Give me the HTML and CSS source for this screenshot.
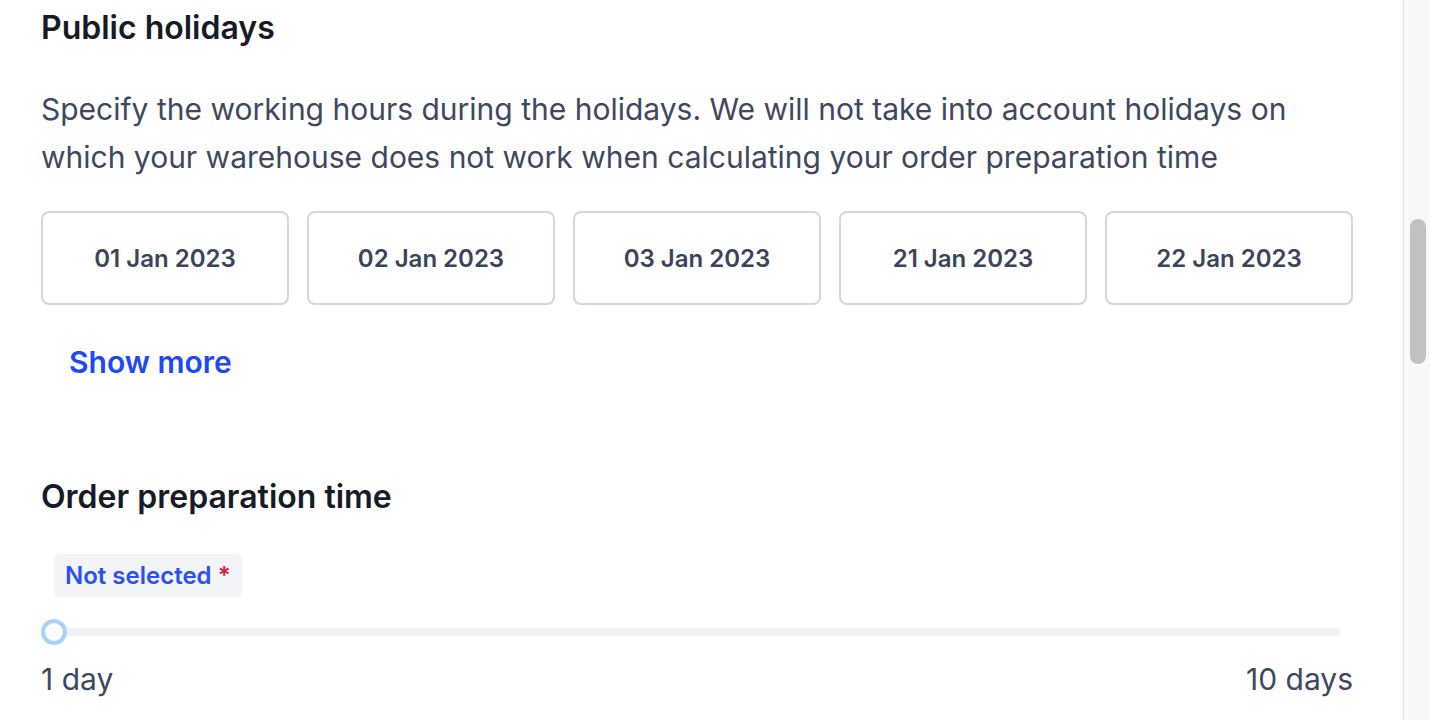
FILE: index.html
```
<!DOCTYPE html>
<html>
<head>
<meta charset="utf-8">
<link rel="stylesheet" href="styles.css">
</head>
<body>
<div class="page">
  <main class="content">
    <h2 class="title">Public holidays</h2>
    <p class="desc">Specify the working hours during the holidays. We will not take into account holidays on which your warehouse does not work when calculating your order preparation time</p>
    <div class="dates">
      <div class="date">01 Jan 2023</div>
      <div class="date">02 Jan 2023</div>
      <div class="date">03 Jan 2023</div>
      <div class="date">21 Jan 2023</div>
      <div class="date">22 Jan 2023</div>
    </div>
    <a class="more">Show more</a>
    <h2 class="title title-order">Order preparation time</h2>
    <div class="badge">Not selected <span class="req">*</span></div>
    <div class="slider">
      <div class="track"></div>
      <div class="thumb"></div>
    </div>
    <div class="range">
      <span>1 day</span>
      <span>10 days</span>
    </div>
  </main>
  <div class="scrollbar"><div class="scroll-thumb"></div></div>
</div>
</body>
</html>
```
FILE: styles.css
```
html, body {
  margin: 0;
  padding: 0;
  height: 100%;
  overflow: hidden;
  background: #fff;
}
body {
  font-family: Inter, "Noto Sans", sans-serif;
  color: #1a1f2c;
}
.page {
  display: flex;
  height: 720px;
}
.content {
  flex: 1;
  padding: 0 40px 0 41px;
}
.title {
  margin: 0;
  padding-top: 8px;
  font-size: 32px;
  line-height: 40px;
  font-weight: 600;
  color: #161b27;
}
.desc {
  margin: 37px 0 0;
  font-size: 30px;
  line-height: 48px;
  color: #3e4861;
  max-width: 1300px;
}
.dates {
  display: grid;
  grid-template-columns: repeat(5, 248px);
  column-gap: 18px;
  margin-top: 30px;
}
.date {
  height: 90px;
  border: 2px solid #d3d6e2;
  border-radius: 8px;
  display: flex;
  align-items: center;
  justify-content: center;
  font-size: 24px;
  font-weight: 600;
  color: #3a445d;
}
.more {
  display: inline-block;
  margin: 39px 0 0 28px;
  font-size: 30px;
  line-height: 36px;
  font-weight: 600;
  color: #2148f6;
}
.title-order {
  margin-top: 97px;
  padding-top: 0;
}
.badge {
  display: inline-block;
  margin: 37px 0 0 13px;
  padding: 0 11px;
  height: 43px;
  line-height: 43px;
  background: #f3f4f8;
  border-radius: 6px;
  font-size: 24px;
  font-weight: 600;
  color: #2a51f1;
}
.req {
  color: #d52441;
}
.slider {
  position: relative;
  height: 28px;
  margin-top: 21px;
  width: 1299px;
}
.track {
  position: absolute;
  left: 0;
  right: 0;
  top: 10px;
  height: 8px;
  border-radius: 4px;
  background: #f1f1f2;
}
.thumb {
  position: absolute;
  left: 0;
  top: 1px;
  width: 18px;
  height: 18px;
  border: 4px solid #a8d1fb;
  border-radius: 50%;
  background: #fff;
}
.range {
  display: flex;
  justify-content: space-between;
  width: 1312px;
  margin-top: 13px;
  font-size: 30px;
  line-height: 40px;
  color: #3e4861;
}
.scrollbar {
  width: 26px;
  border-left: 1px solid #e2e2e2;
  background: #f8f8f8;
  position: relative;
}
.scroll-thumb {
  position: absolute;
  left: 6px;
  top: 219px;
  width: 16px;
  height: 145px;
  border-radius: 8px;
  background: #c1c1c1;
}
```
